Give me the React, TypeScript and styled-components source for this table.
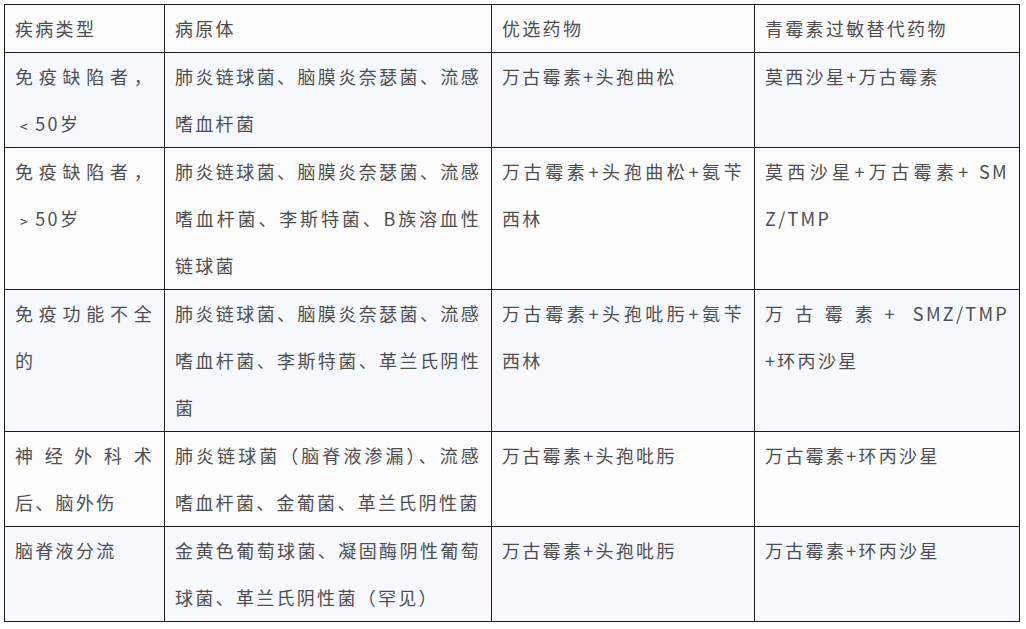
import React from 'react';
import styled, { createGlobalStyle } from 'styled-components';

const GlobalStyle = createGlobalStyle`
  html, body {
    margin: 0;
    padding: 0;
    background: #ffffff;
  }
`;

const Page = styled.div`
  padding: 4px;
`;

const Table = styled.table`
  width: 1015px;
  table-layout: fixed;
  border-collapse: collapse;
  font-family: 'Noto Sans CJK SC', 'Noto Sans', sans-serif;
  font-size: 18px;
  letter-spacing: 2.3px;
  line-height: 47px;
  color: #4e4e4e;
`;

const Row = styled.tr<{ $tinted?: boolean }>`
  background: ${(p) => (p.$tinted ? '#f6f9ff' : '#fcfcfd')};
`;

const Cell = styled.td`
  padding: 0 10px;
  border: 1px solid #1c1c1c;
  vertical-align: top;
  text-align: justify;
  word-wrap: break-word;
`;

const HeadCell = styled(Cell).attrs({ as: 'th' })`
  font-weight: normal;
  text-align: left;
`;

// keeps a chunk on one line so the wrap lands where the source has it
const Keep = styled.span`
  white-space: nowrap;
`;

type RowData = {
  kind: React.ReactNode;
  pathogen: React.ReactNode;
  drug: React.ReactNode;
  alt: React.ReactNode;
};

const rows: RowData[] = [
  {
    kind: '免疫缺陷者，﹤50岁',
    pathogen: '肺炎链球菌、脑膜炎奈瑟菌、流感嗜血杆菌',
    drug: '万古霉素+头孢曲松',
    alt: '莫西沙星+万古霉素',
  },
  {
    kind: '免疫缺陷者，﹥50岁',
    pathogen: '肺炎链球菌、脑膜炎奈瑟菌、流感嗜血杆菌、李斯特菌、B族溶血性链球菌',
    drug: '万古霉素+头孢曲松+氨苄西林',
    alt: (
      <>
        莫西沙星+万古霉素+ SM<wbr />
        <Keep>Z/TMP</Keep>
      </>
    ),
  },
  {
    kind: '免疫功能不全的',
    pathogen: '肺炎链球菌、脑膜炎奈瑟菌、流感嗜血杆菌、李斯特菌、革兰氏阴性菌',
    drug: '万古霉素+头孢吡肟+氨苄西林',
    alt: (
      <>
        万古霉素+ SMZ/TMP <Keep>+环丙沙星</Keep>
      </>
    ),
  },
  {
    kind: '神经外科术后、脑外伤',
    pathogen: '肺炎链球菌（脑脊液渗漏）、流感嗜血杆菌、金葡菌、革兰氏阴性菌',
    drug: '万古霉素+头孢吡肟',
    alt: '万古霉素+环丙沙星',
  },
  {
    kind: '脑脊液分流',
    pathogen: '金黄色葡萄球菌、凝固酶阴性葡萄球菌、革兰氏阴性菌（罕见）',
    drug: '万古霉素+头孢吡肟',
    alt: '万古霉素+环丙沙星',
  },
];

export default function App() {
  return (
    <Page>
      <GlobalStyle />
      <Table lang="zh-CN">
        <colgroup>
          <col style={{ width: 160 }} />
          <col style={{ width: 327 }} />
          <col style={{ width: 263 }} />
          <col style={{ width: 265 }} />
        </colgroup>
        <thead>
          <Row>
            <HeadCell>疾病类型</HeadCell>
            <HeadCell>病原体</HeadCell>
            <HeadCell>优选药物</HeadCell>
            <HeadCell>青霉素过敏替代药物</HeadCell>
          </Row>
        </thead>
        <tbody>
          {rows.map((r, i) => (
            <Row key={i} $tinted={i % 2 === 0}>
              <Cell>{r.kind}</Cell>
              <Cell>{r.pathogen}</Cell>
              <Cell>{r.drug}</Cell>
              <Cell>{r.alt}</Cell>
            </Row>
          ))}
        </tbody>
      </Table>
    </Page>
  );
}
